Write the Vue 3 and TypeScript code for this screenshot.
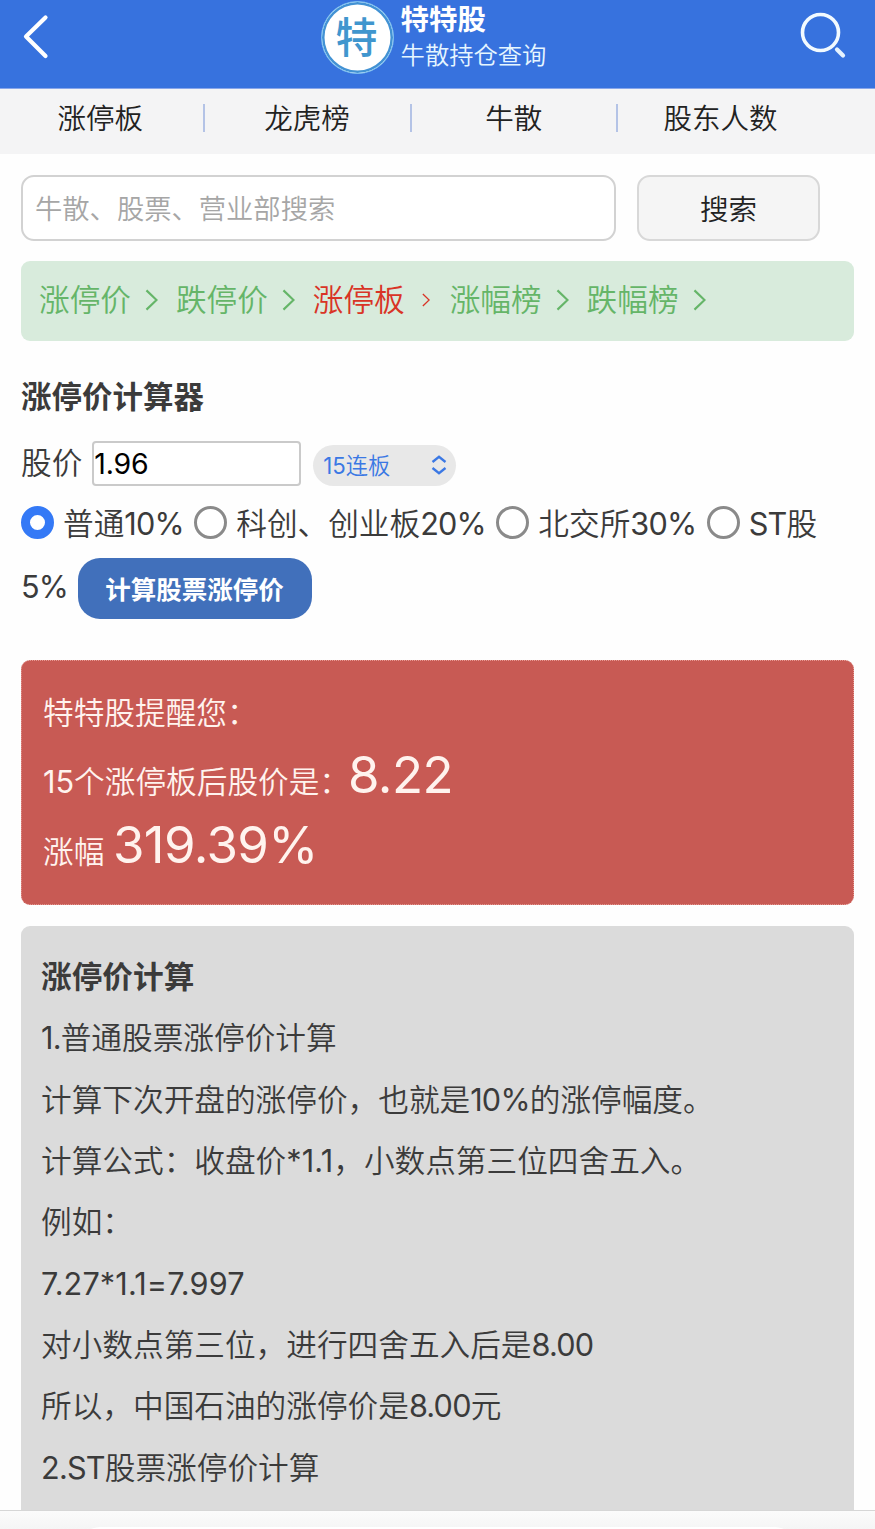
<script setup lang="ts">
import { ref } from 'vue'

interface Crumb {
  label: string
  active?: boolean
}

interface Run {
  text: string
  kind: '' | 'latin' | 'formula'
}

const tabs: string[] = ['涨停板', '龙虎榜', '牛散', '股东人数']

const crumbs: Crumb[] = [
  { label: '涨停价' },
  { label: '跌停价' },
  { label: '涨停板', active: true },
  { label: '涨幅榜' },
  { label: '跌幅榜' },
]

const markets: string[] = ['普通10%', '科创、创业板20%', '北交所30%', 'ST股']
const selected = ref(0)
const price = ref('1.96')

const notes: string[] = [
  '1.普通股票涨停价计算',
  '计算下次开盘的涨停价，也就是10%的涨停幅度。',
  '计算公式：收盘价*1.1，小数点第三位四舍五入。',
  '例如：',
  '7.27*1.1=7.997',
  '对小数点第三位，进行四舍五入后是8.00',
  '所以，中国石油的涨停价是8.00元',
  '2.ST股票涨停价计算',
]

// Splits a line into Latin and Chinese runs so that figures can be set tighter;
// formulas with an asterisk keep their normal spacing.
function runs(line: string): Run[] {
  const parts = line.match(/[\x21-\x7e]+|[^\x21-\x7e]+/g) ?? []
  return parts.map((text): Run => {
    if (!/^[\x21-\x7e]/.test(text)) return { text, kind: '' }
    return { text, kind: text.includes('*') ? 'formula' : 'latin' }
  })
}
</script>

<template>
  <div class="page">
    <header class="top">
      <svg class="back" width="28" height="46" viewBox="0 0 28 46">
        <path d="M23.500 3.500 4 22.500 23.500 42" fill="none" stroke="#fff" stroke-width="4.200" stroke-linecap="round" stroke-linejoin="round" />
      </svg>
      <div class="brand">
        <div class="logo"><span>特</span></div>
        <div class="names">
          <div class="name">特特股</div>
          <div class="sub">牛散持仓查询</div>
        </div>
      </div>
      <svg class="find" width="48" height="48" viewBox="0 0 48 48">
        <circle cx="21.500" cy="21.500" r="18" fill="none" stroke="#f2faff" stroke-width="3.600" />
        <path d="M38 38.500 44 44.500" fill="none" stroke="#e6f3ff" stroke-width="4.200" stroke-linecap="round" />
      </svg>
    </header>

    <nav class="tabs">
      <a v-for="t in tabs" :key="t" class="tab">{{ t }}</a>
    </nav>

    <form class="search" @submit.prevent>
      <input class="query" type="text" placeholder="牛散、股票、营业部搜索" />
      <button class="go" type="button">搜索</button>
    </form>

    <div class="crumbs">
      <span v-for="c in crumbs" :key="c.label" class="crumb" :class="{ active: c.active }">
        <span class="crumb-text">{{ c.label }}</span>
        <svg class="chev" viewBox="0 0 14 24">
          <path d="M1.500 1.500 12.500 12 1.500 22.500" fill="none" stroke="currentColor" stroke-width="2.300" />
        </svg>
      </span>
    </div>

    <section class="calc">
      <h2 class="title">涨停价计算器</h2>
      <div class="row price-row">
        <span class="caption">股价</span>
        <input v-model="price" class="price" type="text" />
        <div class="select">
          <span class="choice"><span class="figure">15</span>连板</span>
          <svg width="16" height="20" viewBox="0 0 16 20">
            <path d="M1.500 7 8 1.800 14.500 7M1.500 13 8 18.200 14.500 13" fill="none" stroke="#3b78e4" stroke-width="2.300" />
          </svg>
        </div>
      </div>
      <div class="row radios">
        <label v-for="(m, i) in markets" :key="m" class="option" @click="selected = i">
          <i class="dot" :class="{ on: selected === i }"></i>
          <span class="option-text"><span v-for="(r, k) in runs(m)" :key="k" :class="r.kind">{{ r.text }}</span></span>
        </label>
      </div>
      <div class="row last">
        <span class="latin five">5%</span>
        <button class="submit" type="button">计算股票涨停价</button>
      </div>
    </section>

    <section class="result">
      <p class="hint">特特股提醒您：</p>
      <p><span class="figure">15</span>个涨停板后股价是：<span class="big first">8.22</span></p>
      <p>涨幅 <span class="big">319.39%</span></p>
    </section>

    <section class="notes">
      <h3>涨停价计算</h3>
      <p v-for="n in notes" :key="n"><span v-for="(r, k) in runs(n)" :key="k" :class="r.kind">{{ r.text }}</span></p>
    </section>

    <footer class="bar"><div class="address"></div></footer>
  </div>
</template>

<style>
html,
body {
  margin: 0;
  background: #fefefe;
}
</style>

<style scoped>
.page {
  display: flex;
  flex-direction: column;
  width: 875px;
  height: 1529px;
  overflow: hidden;
  box-sizing: border-box;
  background: #fefefe;
  color: #3b3b3b;
  font-family: Inter, 'Noto Sans CJK SC', sans-serif;
  font-size: 30.67px;
  font-weight: 350;
}
.page * {
  box-sizing: border-box;
}
.page > * {
  flex-shrink: 0;
}
input,
button {
  font-family: inherit;
  font-weight: inherit;
  margin: 0;
}
h2,
h3,
p {
  margin: 0;
  white-space: nowrap;
}
.figure {
  font-weight: 400;
}
.latin {
  font-weight: 400;
  letter-spacing: -0.8px;
}
.formula {
  font-weight: 400;
  letter-spacing: 0.12px;
}
.top {
  display: flex;
  justify-content: space-between;
  align-items: flex-start;
  height: 89px;
  padding: 0 28px 0 22px;
  background: #3772de;
  border-bottom: 1px solid #88a6ea;
}
.back {
  margin-top: 14px;
}
.brand {
  display: flex;
  margin-left: 18px;
}
.logo {
  display: flex;
  justify-content: center;
  align-items: center;
  width: 73px;
  height: 73px;
  margin-top: 1px;
  padding-right: 1px;
  border-radius: 50%;
  border: 1.5px solid #75bdf0;
  background: #fff;
  box-shadow: inset 0 0 0 2.5px #4292d4;
  color: #4096ce;
  font-size: 42px;
  font-weight: 500;
  line-height: 1;
}
.names {
  margin-left: 7px;
  color: #fff;
  white-space: nowrap;
}
.name {
  height: 37px;
  line-height: 39px;
  font-size: 28.4px;
  font-weight: 700;
}
.sub {
  line-height: 37px;
  font-size: 24.3px;
  color: #e6f6ff;
}
.find {
  margin-top: 11px;
}
.tabs {
  display: flex;
  height: 65px;
  padding-right: 48px;
  background: #f4f4f5;
}
.tab {
  position: relative;
  width: 206.75px;
  padding-right: 6px;
  text-align: center;
  line-height: 60px;
  font-size: 28.5px;
  color: #222;
}
.tab:not(:last-child)::after {
  content: '';
  position: absolute;
  right: 2px;
  top: 15px;
  width: 2px;
  height: 28px;
  background: #b4c3e6;
}
.search {
  display: flex;
  gap: 21px;
  margin: 21px 0 0 21px;
}
.query {
  width: 595px;
  height: 66px;
  padding: 3px 12px 0;
  border: 2px solid #d2d2d2;
  border-radius: 13px;
  background: #fff;
  font-size: 27.3px;
  outline: none;
}
.query::placeholder {
  color: #a6a6a6;
  opacity: 1;
}
.go {
  width: 183px;
  height: 66px;
  padding: 0 0 2px;
  border: 2px solid #d8d8d8;
  border-radius: 13px;
  background: #f5f5f5;
  color: #222;
  font-size: 28.5px;
}
.crumbs {
  display: flex;
  height: 80px;
  margin: 20px 21px 0;
  padding: 0 18px 3px;
  border-radius: 9px;
  background: #d8ebdc;
  align-items: center;
}
.crumb {
  display: flex;
  align-items: center;
  width: 136.9px;
  white-space: nowrap;
  color: #65b568;
}
.crumb-text {
  margin-bottom: 4px;
}
.chev {
  width: 13px;
  height: 22px;
  margin-left: 14px;
}
.active {
  color: #d93426;
}
.active .chev {
  width: 8px;
  height: 14px;
  margin-left: 17px;
}
.calc {
  height: 319px;
  padding: 25px 21px 0;
}
.title {
  height: 67px;
  line-height: 61px;
  font-size: 30.5px;
  font-weight: 700;
}
.row {
  display: flex;
  align-items: center;
  height: 61px;
  white-space: nowrap;
}
.price-row {
  height: 60px;
}
.caption {
  margin-bottom: 5px;
}
.price {
  width: 209px;
  height: 45px;
  margin-left: 10px;
  padding: 0;
  border: 2px solid #cacaca;
  border-radius: 4px;
  background: #fff;
  color: #000;
  font-size: 28.5px;
  font-weight: 400;
  letter-spacing: -0.2px;
  outline: none;
}
.select {
  display: flex;
  align-items: center;
  justify-content: space-between;
  width: 143px;
  height: 41px;
  margin: 4px 0 0 12px;
  padding: 0 9px 0 10px;
  border-radius: 21px;
  background: #e8e8e8;
  color: #3b78e4;
  font-size: 22.2px;
}
.choice {
  margin-bottom: 2px;
}
.radios {
  height: 63px;
}
.option {
  display: flex;
  align-items: center;
  margin-right: 10.4px;
}
.dot {
  width: 33px;
  height: 33px;
  margin: 0 9px 5px 0;
  border: 3px solid #8a8a8a;
  border-radius: 50%;
  background: #fff;
}
.dot.on {
  border: 9px solid #3479f6;
}
.option-text {
  margin-bottom: 6px;
}
.five {
  width: 47px;
}
.submit {
  width: 234px;
  height: 61px;
  margin: 3px 0 0 10px;
  padding: 0 1px 2px 0;
  border: 0;
  border-radius: 22px;
  background: #4170bb;
  color: #fff;
  font-size: 25.5px;
  font-weight: 700;
}
.result {
  height: 245px;
  margin: 0 21px;
  padding: 25px 21px 0;
  border: 1px dotted #e79a93;
  border-radius: 9px;
  background: #c85a54;
  color: #fff3ee;
}
.result p {
  height: 69.5px;
  line-height: 69.5px;
}
.result .hint {
  height: 54px;
  line-height: 54px;
}
.big {
  font-size: 51px;
  font-weight: 400;
  letter-spacing: -0.6px;
}
.first {
  margin-left: -2px;
}
.notes {
  flex: 1 1 0;
  min-height: 0;
  overflow: hidden;
  margin: 21px 21px 0;
  padding: 20px;
  border-radius: 9px 9px 0 0;
  background: #dbdbdb;
}
.notes h3,
.notes p {
  height: 61.33px;
  line-height: 61.33px;
  font-size: 30.67px;
}
.bar {
  height: 19px;
  padding: 16px 80px 0;
  border-top: 1px solid #d6d6d6;
  background: linear-gradient(#fbfbfb, #f5f5f5);
  overflow: hidden;
}
.address {
  height: 40px;
  border-radius: 20px;
  background: #fff;
}
</style>
